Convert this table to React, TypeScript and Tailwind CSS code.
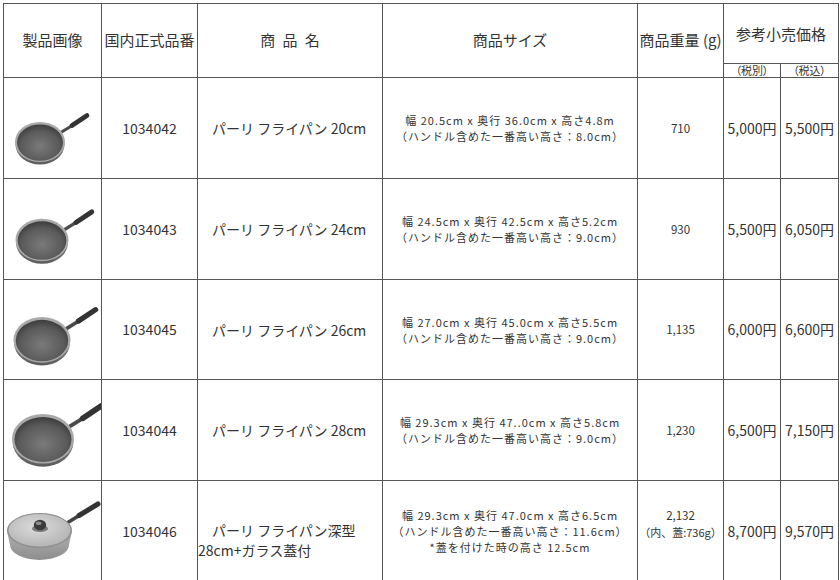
import { useId } from "react";
import type { ReactNode } from "react";

type PanPos = { cx: number; cy: number; s: number };

type Row = {
  code: string;
  name: ReactNode;
  size: string[];
  weight: string[];
  priceEx: string;
  priceIn: string;
  pan: PanPos | "lid";
};

const rows: Row[] = [
  {
    code: "1034042",
    name: "　パーリ フライパン 20cm",
    size: ["幅 20.5cm x 奥行 36.0cm x 高さ4.8m", "（ハンドル含めた一番高い高さ：8.0cm）"],
    weight: ["710"],
    priceEx: "5,000円",
    priceIn: "5,500円",
    pan: { cx: 36, cy: 65, s: 1 },
  },
  {
    code: "1034043",
    name: "　パーリ フライパン 24cm",
    size: ["幅 24.5cm x 奥行 42.5cm x 高さ5.2cm", "（ハンドル含めた一番高い高さ：9.0cm）"],
    weight: ["930"],
    priceEx: "5,500円",
    priceIn: "6,050円",
    pan: { cx: 38, cy: 62, s: 1.06 },
  },
  {
    code: "1034045",
    name: "　パーリ フライパン 26cm",
    size: ["幅 27.0cm x 奥行 45.0cm x 高さ5.5cm", "（ハンドル含めた一番高い高さ：9.0cm）"],
    weight: ["1,135"],
    priceEx: "6,000円",
    priceIn: "6,600円",
    pan: { cx: 38, cy: 61, s: 1.14 },
  },
  {
    code: "1034044",
    name: "　パーリ フライパン 28cm",
    size: ["幅 29.3cm x 奥行 47..0cm x 高さ5.8cm", "（ハンドル含めた一番高い高さ：9.0cm）"],
    weight: ["1,230"],
    priceEx: "6,500円",
    priceIn: "7,150円",
    pan: { cx: 39, cy: 60, s: 1.24 },
  },
  {
    code: "1034046",
    name: (
      <>
        {"　パーリ フライパン深型"}
        <br />
        {"28cm+ガラス蓋付"}
      </>
    ),
    size: [
      "幅 29.3cm x 奥行 47.0cm x 高さ6.5cm",
      "（ハンドル含めた一番高い高さ：11.6cm）",
      "*蓋を付けた時の高さ 12.5cm",
    ],
    weight: ["2,132", "（内、蓋:736g）"],
    priceEx: "8,700円",
    priceIn: "9,570円",
    pan: "lid",
  },
];

function Pan({ cx, cy, s }: PanPos) {
  const id = useId().replace(/:/g, "");
  return (
    <svg width="97" height="100" viewBox="0 0 97 100" className="block">
      <defs>
        <linearGradient id={`w${id}`} x1="0" y1="0" x2="0" y2="1">
          <stop offset="0" stopColor="#9a9a9a" />
          <stop offset="1" stopColor="#5c5c5c" />
        </linearGradient>
        <radialGradient id={`i${id}`} cx="0.5" cy="0.6" r="0.6">
          <stop offset="0" stopColor="#7a7a7a" />
          <stop offset="0.7" stopColor="#5a5a5a" />
          <stop offset="1" stopColor="#3c3c3c" />
        </radialGradient>
      </defs>
      <g transform={`translate(${cx} ${cy}) scale(${s})`}>
        <path d="M20 -10 L33 -18" stroke="#4a4a4a" strokeWidth="3.2" strokeLinecap="round" />
        <path d="M32 -17.5 L47 -27.5" stroke="#333" strokeWidth="4.6" strokeLinecap="round" />
        <ellipse cx="0" cy="1.5" rx="24.5" ry="20" fill={`url(#w${id})`} />
        <ellipse cx="0" cy="-1" rx="25" ry="20" fill="#a9a9a9" />
        <ellipse cx="0" cy="-0.4" rx="23" ry="18.2" fill={`url(#i${id})`} />
      </g>
    </svg>
  );
}

function LidPan() {
  return (
    <svg width="97" height="100" viewBox="0 0 97 100" className="block">
      <defs>
        <linearGradient id="lidbody" x1="0" y1="0" x2="0" y2="1">
          <stop offset="0" stopColor="#c4c4c4" />
          <stop offset="1" stopColor="#8e8e8e" />
        </linearGradient>
        <radialGradient id="lidglass" cx="0.45" cy="0.4" r="0.65">
          <stop offset="0" stopColor="#dcdcdc" />
          <stop offset="1" stopColor="#b2b2b2" />
        </radialGradient>
      </defs>
      <path d="M63 42 L76 34" stroke="#444" strokeWidth="3.6" strokeLinecap="round" />
      <path d="M75 34.5 L94 23" stroke="#333" strokeWidth="5" strokeLinecap="round" />
      <path d="M3 50 A32.5 17.5 0 0 1 68 50 L65 64 A29.5 15 0 0 1 6 64 Z" fill="url(#lidbody)" />
      <ellipse cx="35.5" cy="49.5" rx="32.5" ry="17.5" fill="#8f8f8f" />
      <ellipse cx="35.5" cy="49.3" rx="31" ry="16.3" fill="url(#lidglass)" />
      <ellipse cx="36" cy="47.5" rx="8" ry="3.6" fill="#7a7a7a" />
      <ellipse cx="36" cy="44" rx="6.2" ry="5.2" fill="#3a3a3a" />
      <ellipse cx="34.6" cy="42.3" rx="3" ry="1.8" fill="#8a8a8a" />
    </svg>
  );
}

const cell = "bg-white flex items-center justify-center";

export default function App() {
  return (
    <div className="min-h-[580px] bg-white pl-[3px] pt-[3px] font-['Noto_Sans_CJK_JP',sans-serif] text-[#333]">
      <div className="grid w-fit grid-cols-[97px_95px_184px_254px_85px_56px_57px] grid-rows-[59px_13px_100px_100px_99px_100px_100px] gap-px bg-[#555] p-px">
        <div className={`${cell} row-span-2 text-[15px]`}>製品画像</div>
        <div className={`${cell} row-span-2 text-[15px]`}>国内正式品番</div>
        <div className={`${cell} row-span-2 text-[15px] [word-spacing:4px]`}>商 品 名</div>
        <div className={`${cell} row-span-2 text-[15px]`}>商品サイズ</div>
        <div className={`${cell} row-span-2 whitespace-nowrap text-[15px]`}>商品重量 (g)</div>
        <div className={`${cell} col-span-2 pt-[1px] text-[15px]`}>参考小売価格</div>
        <div className={`${cell} text-[11px] leading-none [font-feature-settings:'palt']`}>（税別）</div>
        <div className={`${cell} text-[11px] leading-none [font-feature-settings:'palt']`}>（税込）</div>

        {rows.map((r) => (
          <Product key={r.code} row={r} />
        ))}
      </div>
    </div>
  );
}

function Product({ row }: { row: Row }) {
  const last = row.pan === "lid";
  return (
    <>
      <div className="bg-white overflow-hidden">
        {row.pan === "lid" ? <LidPan /> : <Pan {...row.pan} />}
      </div>
      <div className={`${cell} text-[14px]`}>{row.code}</div>
      <div className="bg-white flex items-center">
        <div className={`whitespace-nowrap text-[14px] leading-[20px] ${last ? "mt-[18px]" : ""}`}>
          {row.name}
        </div>
      </div>
      <div className={`${cell} flex-col whitespace-nowrap text-[11px] leading-[16px] tracking-[1px]`}>
        {row.size.map((l) => (
          <div key={l}>{l}</div>
        ))}
      </div>
      <div className={`${cell} flex-col whitespace-nowrap leading-[17px]`}>
        <div className={`flex flex-col items-center ${last ? "mb-[15px]" : ""}`}>
          {row.weight.map((w, i) => (
            <div key={w} className={i === 0 ? "text-[11.5px]" : "text-[11px]"}>
              {w}
            </div>
          ))}
        </div>
      </div>
      <div className={`${cell} whitespace-nowrap text-[14px]`}>{row.priceEx}</div>
      <div className={`${cell} whitespace-nowrap text-[14px]`}>{row.priceIn}</div>
    </>
  );
}
